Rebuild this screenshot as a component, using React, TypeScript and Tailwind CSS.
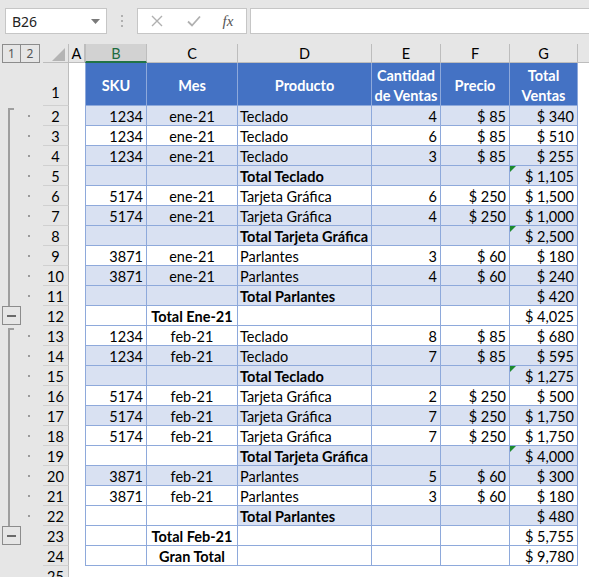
import React from "react";

type Row = {
  n: number;
  sku?: string;
  mes?: string;
  prod?: string;
  cant?: string;
  precio?: string;
  total: string;
  bandBC: boolean;
  bandRest: boolean;
  tri?: boolean;
  totalMes?: boolean;
  totalProd?: boolean;
};

const rows: Row[] = [
  { n: 2, sku: "1234", mes: "ene-21", prod: "Teclado", cant: "4", precio: "$ 85", total: "$ 340", bandBC: true, bandRest: true },
  { n: 3, sku: "1234", mes: "ene-21", prod: "Teclado", cant: "6", precio: "$ 85", total: "$ 510", bandBC: false, bandRest: false },
  { n: 4, sku: "1234", mes: "ene-21", prod: "Teclado", cant: "3", precio: "$ 85", total: "$ 255", bandBC: true, bandRest: true },
  { n: 5, prod: "Total Teclado", total: "$ 1,105", bandBC: true, bandRest: true, tri: true, totalProd: true },
  { n: 6, sku: "5174", mes: "ene-21", prod: "Tarjeta Gráfica", cant: "6", precio: "$ 250", total: "$ 1,500", bandBC: false, bandRest: false },
  { n: 7, sku: "5174", mes: "ene-21", prod: "Tarjeta Gráfica", cant: "4", precio: "$ 250", total: "$ 1,000", bandBC: true, bandRest: true },
  { n: 8, prod: "Total Tarjeta Gráfica", total: "$ 2,500", bandBC: true, bandRest: true, tri: true, totalProd: true },
  { n: 9, sku: "3871", mes: "ene-21", prod: "Parlantes", cant: "3", precio: "$ 60", total: "$ 180", bandBC: false, bandRest: false },
  { n: 10, sku: "3871", mes: "ene-21", prod: "Parlantes", cant: "4", precio: "$ 60", total: "$ 240", bandBC: true, bandRest: true },
  { n: 11, prod: "Total Parlantes", total: "$ 420", bandBC: true, bandRest: true, totalProd: true },
  { n: 12, mes: "Total Ene-21", total: "$ 4,025", bandBC: false, bandRest: false, totalMes: true },
  { n: 13, sku: "1234", mes: "feb-21", prod: "Teclado", cant: "8", precio: "$ 85", total: "$ 680", bandBC: false, bandRest: false },
  { n: 14, sku: "1234", mes: "feb-21", prod: "Teclado", cant: "7", precio: "$ 85", total: "$ 595", bandBC: true, bandRest: true },
  { n: 15, prod: "Total Teclado", total: "$ 1,275", bandBC: true, bandRest: true, tri: true, totalProd: true },
  { n: 16, sku: "5174", mes: "feb-21", prod: "Tarjeta Gráfica", cant: "2", precio: "$ 250", total: "$ 500", bandBC: false, bandRest: false },
  { n: 17, sku: "5174", mes: "feb-21", prod: "Tarjeta Gráfica", cant: "7", precio: "$ 250", total: "$ 1,750", bandBC: true, bandRest: true },
  { n: 18, sku: "5174", mes: "feb-21", prod: "Tarjeta Gráfica", cant: "7", precio: "$ 250", total: "$ 1,750", bandBC: false, bandRest: false },
  { n: 19, prod: "Total Tarjeta Gráfica", total: "$ 4,000", bandBC: false, bandRest: true, tri: true, totalProd: true },
  { n: 20, sku: "3871", mes: "feb-21", prod: "Parlantes", cant: "5", precio: "$ 60", total: "$ 300", bandBC: true, bandRest: true },
  { n: 21, sku: "3871", mes: "feb-21", prod: "Parlantes", cant: "3", precio: "$ 60", total: "$ 180", bandBC: false, bandRest: false },
  { n: 22, prod: "Total Parlantes", total: "$ 480", bandBC: false, bandRest: true, totalProd: true },
  { n: 23, mes: "Total Feb-21", total: "$ 5,755", bandBC: false, bandRest: false, totalMes: true },
  { n: 24, mes: "Gran Total", total: "$ 9,780", bandBC: false, bandRest: false, totalMes: true },
];

const Gutter = ({ n }: { n: number }) => {
  const minus = n === 12 || n === 23;
  const start = n === 2 || n === 13;
  const detail = (n >= 2 && n <= 11) || (n >= 13 && n <= 22);

  if (minus) {
    return (
      <div className="w-[43px] h-full bg-[#e6e6e6] flex items-start">
        <div className="ml-[2px] w-[19px] h-[19px] border border-[#8c8c8c] flex items-center justify-center">
          <div className="w-[9px] h-[2px] bg-[#6a6a6a]" />
        </div>
      </div>
    );
  }
  return (
    <div className="w-[43px] h-full bg-[#e6e6e6] flex items-center">
      {detail ? (
        <div className={`ml-[8px] w-[6px] h-full flex flex-col ${start ? "pt-[2px]" : ""}`}>
          {start && <div className="w-[6px] h-[2px] bg-[#9e9e9e]" />}
          <div className="w-[2px] flex-1 bg-[#9e9e9e]" />
        </div>
      ) : (
        <div className="ml-[8px] w-[6px]" />
      )}
      {detail && <div className="ml-[14px] w-[2px] h-[2px] bg-[#9a9a9a]" />}
    </div>
  );
};

const RowHead = ({ n, tall }: { n: number; tall?: boolean }) => (
  <div
    className={`w-[26px] h-full bg-[#e6e6e6] border-r border-b border-r-[#bdbdbd] border-b-[#d0d0d0] flex justify-center text-[14.5px] text-black ${
      tall ? "items-end pb-[1px]" : "items-center pt-[2px]"
    }`}
  >
    {n}
  </div>
);

const cellBase = "h-full pt-[2px] border-r border-b border-[#8ea9db] flex items-center text-[14.5px] text-black whitespace-nowrap";

const DataRow = ({ r }: { r: Row }) => {
  const bc = r.bandBC ? "bg-[#d9e1f2]" : "bg-white";
  const rest = r.bandRest ? "bg-[#d9e1f2]" : "bg-white";
  return (
    <div className="flex h-[20px]">
      <Gutter n={r.n} />
      <RowHead n={r.n} />
      <div className="w-[16px] h-full bg-white" />
      <div className={`w-[62px] border-l justify-end pr-[3px] ${cellBase} ${bc}`}>{r.sku}</div>
      <div className={`w-[91px] justify-center ${cellBase} ${bc} ${r.totalMes ? "font-bold" : ""}`}>{r.mes}</div>
      <div className={`w-[134px] pl-[2px] ${cellBase} ${rest} ${r.totalProd ? "font-bold" : ""}`}>{r.prod}</div>
      <div className={`w-[69px] justify-end pr-[3px] ${cellBase} ${rest}`}>{r.cant}</div>
      <div className={`w-[69px] justify-end pr-[3px] ${cellBase} ${rest}`}>{r.precio}</div>
      <div className={`relative w-[68px] justify-end pr-[3px] ${cellBase} ${rest}`}>
        {r.tri && (
          <div className="absolute top-0 left-0 w-0 h-0 border-t-[6px] border-t-[#1d8a2f] border-r-[6px] border-r-transparent" />
        )}
        {r.total}
      </div>
      <div className="w-[11px] h-full bg-white" />
    </div>
  );
};

const headCell = "h-full pt-[3px] border-r border-b border-r-[#8ea9db] border-b-[#8ea9db] bg-[#4472c4] text-white font-bold text-[14.5px] leading-[20px] flex items-center justify-center text-center";

const colHead = "h-full pt-[2px] border-r border-b border-r-[#bdbdbd] border-b-[#bdbdbd] bg-[#e6e6e6] flex items-center justify-center text-[14.5px] text-black";

export default function App() {
  return (
    <div className="w-[589px] h-[577px] overflow-hidden bg-white select-none" style={{ fontFamily: "Lato, 'Noto Sans', sans-serif" }}>
      {/* formula bar */}
      <div className="h-[44px] bg-[#e6e6e6] flex items-start pt-[8px] pl-[5px]">
        <div className="w-[102px] h-[26px] bg-white border border-[#c6c6c6] flex items-center pl-[6px] pr-[6px] text-[14px] text-[#222]" style={{ fontFamily: "'Noto Sans', sans-serif" }}>
          <span className="flex-1">B26</span>
          <svg width="9" height="5" viewBox="0 0 9 5">
            <path d="M0 0 L9 0 L4.5 5 Z" fill="#7a7a7a" />
          </svg>
        </div>
        <div className="w-[30px] h-[26px] flex flex-col items-center justify-center gap-[3px]">
          <div className="w-[2px] h-[2px] bg-[#b0b0b0]" />
          <div className="w-[2px] h-[2px] bg-[#b0b0b0]" />
          <div className="w-[2px] h-[2px] bg-[#b0b0b0]" />
        </div>
        <div className="w-[110px] h-[26px] bg-white border border-[#c6c6c6] flex items-center">
          <div className="w-[38px] flex justify-center">
            <svg width="12" height="12" viewBox="0 0 12 12">
              <path d="M1 1 L11 11 M11 1 L1 11" stroke="#b0b0b0" strokeWidth="1.4" />
            </svg>
          </div>
          <div className="w-[36px] flex justify-center">
            <svg width="14" height="12" viewBox="0 0 14 12">
              <path d="M1 6.5 L5 10.5 L13 1.5" stroke="#b0b0b0" strokeWidth="1.8" fill="none" />
            </svg>
          </div>
          <div className="flex-1 flex justify-center pr-[2px] italic text-[15px] text-[#555]" style={{ fontFamily: "'Liberation Serif', serif" }}>
            fx
          </div>
        </div>
        <div className="ml-[3px] flex-1 h-[26px] bg-white border border-r-0 border-[#c6c6c6]" />
      </div>

      {/* column headers */}
      <div className="flex h-[19px]">
        <div className="w-[43px] h-full bg-[#e6e6e6] flex pl-[2px]">
          <div className="w-[19px] h-[19px] border border-[#8c8c8c] flex items-center justify-center text-[12px] text-[#555]" style={{ fontFamily: "'Noto Sans', sans-serif" }}>
            1
          </div>
          <div className="w-[19px] h-[19px] border border-l-0 border-[#8c8c8c] flex items-center justify-center text-[12px] text-[#555]" style={{ fontFamily: "'Noto Sans', sans-serif" }}>
            2
          </div>
        </div>
        <div className="w-[26px] h-full bg-[#e6e6e6] border-r border-b border-[#bdbdbd] flex items-end justify-end pr-[3px] pb-[1px]">
          <svg width="13" height="13" viewBox="0 0 13 13">
            <path d="M13 0 L13 13 L0 13 Z" fill="#b4b4b4" />
          </svg>
        </div>
        <div className={`w-[16px] ${colHead}`}>A</div>
        <div className="w-[62px] h-full pt-[2px] border-l border-r border-[#bdbdbd] bg-[#d2d2d2] border-b-2 border-b-[#217346] flex items-center justify-center text-[14.5px] text-[#1e6b3f]">
          B
        </div>
        <div className={`w-[91px] ${colHead}`}>C</div>
        <div className={`w-[134px] ${colHead}`}>D</div>
        <div className={`w-[69px] ${colHead}`}>E</div>
        <div className={`w-[69px] ${colHead}`}>F</div>
        <div className={`w-[68px] ${colHead}`}>G</div>
        <div className="w-[11px] h-full bg-[#e6e6e6] border-b border-[#bdbdbd]" />
      </div>

      {/* row 1: table header */}
      <div className="flex h-[43px]">
        <Gutter n={1} />
        <RowHead n={1} tall />
        <div className="w-[16px] h-full bg-white" />
        <div className={`w-[62px] border-l border-l-[#8ea9db] ${headCell}`}>SKU</div>
        <div className={`w-[91px] ${headCell}`}>Mes</div>
        <div className={`w-[134px] ${headCell}`}>Producto</div>
        <div className={`w-[69px] ${headCell}`}>
          Cantidad
          <br />
          de Ventas
        </div>
        <div className={`w-[69px] ${headCell}`}>Precio</div>
        <div className={`w-[68px] ${headCell}`}>
          Total
          <br />
          Ventas
        </div>
        <div className="w-[11px] h-full bg-white" />
      </div>

      {rows.map((r) => (
        <DataRow key={r.n} r={r} />
      ))}

      {/* row 25 */}
      <div className="flex h-[20px]">
        <Gutter n={25} />
        <RowHead n={25} />
        <div className="flex-1 h-full bg-white" />
      </div>
    </div>
  );
}
